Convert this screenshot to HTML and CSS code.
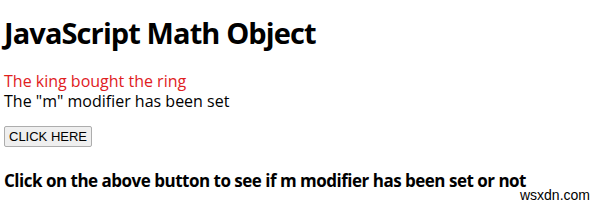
FILE: index.html
```html
<!DOCTYPE html>
<html>
<head>
    <title>JavaScript Math Object</title>
    <link rel="stylesheet" href="styles.css">
</head>
<body>
    <h1>JavaScript Math Object</h1>
    <p class="sample">The king bought the ring</p>
    <p class="result">The "m" modifier has been set</p>
    <button class="btn">CLICK HERE</button>
    <h3>Click on the above button to see if m modifier has been set or not</h3>
    <div class="mark">wsxdn.com</div>
</body>
</html>
```

FILE: styles.css
```css
body {
    font-family: "Open Sans", "Noto Sans", sans-serif;
    margin: 0;
    padding: 8px 5px 8px 4px;
    color: #000;
    background: #fff;
}
h1 {
    font-size: 29px;
    font-weight: bold;
    letter-spacing: -0.9px;
    margin: 5px 0 18px;
    line-height: 40px;
}
.sample {
    color: #e0201e;
    font-size: 16px;
    margin: 0;
    line-height: 20px;
}
.result {
    font-size: 16px;
    margin: 0 0 13px;
    line-height: 20px;
}
.btn {
    font-family: "Liberation Sans", Arial, sans-serif;
    font-size: 13px;
    padding: 2px 4px;
    border: 1px solid #adadad;
    background: #efefef;
    border-radius: 2px;
}
h3 {
    font-size: 17px;
    letter-spacing: -0.5px;
    margin: 22px 0 0;
}
.mark {
    position: absolute;
    right: 10px;
    top: 187px;
    font-family: "Liberation Sans", Arial, sans-serif;
    font-size: 14px;
}
```
